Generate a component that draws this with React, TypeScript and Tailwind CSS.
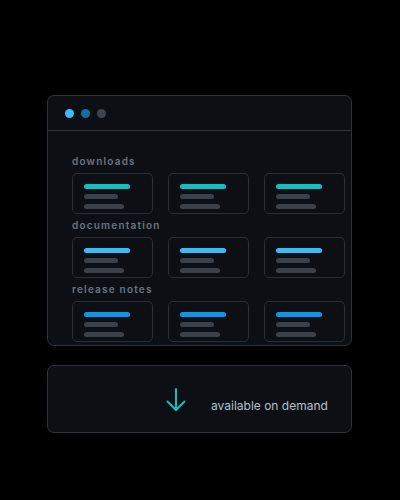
import React from "react";

const rows = [
  { label: "downloads", color: "bg-[#12c0c0]" },
  { label: "documentation", color: "bg-[#38bdf8]" },
  { label: "release notes", color: "bg-[#0b98ec]" },
];

function Card({ color }: { color: string }) {
  return (
    <div className="h-[41px] rounded-[5px] border border-[#292f36] bg-[#0c1015] pl-[11px] pt-[10px] flex flex-col gap-[5px]">
      <div className={`h-[5px] w-[46px] rounded-full ${color}`} />
      <div className="h-[5px] w-[34px] rounded-full bg-[#3a4149]" />
      <div className="h-[5px] w-[40px] rounded-full bg-[#3a4149]" />
    </div>
  );
}

export default function App() {
  return (
    <div
      className="w-[400px] h-[500px] bg-black pt-[95px] pl-[47px]"
      style={{ fontFamily: "Inter, 'Noto Sans', sans-serif" }}
    >
      <div className="w-[305px] h-[251px] rounded-[7px] border border-[#2d333b] bg-[#0c1015] overflow-hidden">
        <div className="h-[35px] border-b border-[#2d333b] flex items-center pl-[17px] gap-[7px]">
          <div className="w-[9px] h-[9px] rounded-full bg-[#3cbcf6]" />
          <div className="w-[9px] h-[9px] rounded-full bg-[#10709e]" />
          <div className="w-[9px] h-[9px] rounded-full bg-[#3d444c]" />
        </div>
        <div className="pl-[24px] pt-[24px] flex flex-col gap-[5px]">
          {rows.map((r) => (
            <div key={r.label} className="flex flex-col gap-[6px]">
              <div className="h-[12px] leading-[12px] text-[10px] font-semibold tracking-[1.2px] text-[#6b7480]">
                {r.label}
              </div>
              <div className="grid grid-cols-3 gap-[15px] w-[273px]">
                <Card color={r.color} />
                <Card color={r.color} />
                <Card color={r.color} />
              </div>
            </div>
          ))}
        </div>
      </div>
      <div className="mt-[19px] w-[305px] h-[68px] rounded-[7px] border border-[#2d333b] bg-[#0c1015] flex items-center pl-[118px]">
        <svg width="20" height="24" viewBox="0 0 20 24" fill="none" stroke="#14bfc0" strokeWidth="2" strokeLinecap="round" strokeLinejoin="round" className="mt-[2px]">
          <path d="M10 1v21" />
          <path d="M1.5 13.5L10 22l8.5-8.5" />
        </svg>
        <span className="ml-[25px] mt-[14px] text-[12px] leading-[16px] text-[#b7c0c9]">available on demand</span>
      </div>
    </div>
  );
}
